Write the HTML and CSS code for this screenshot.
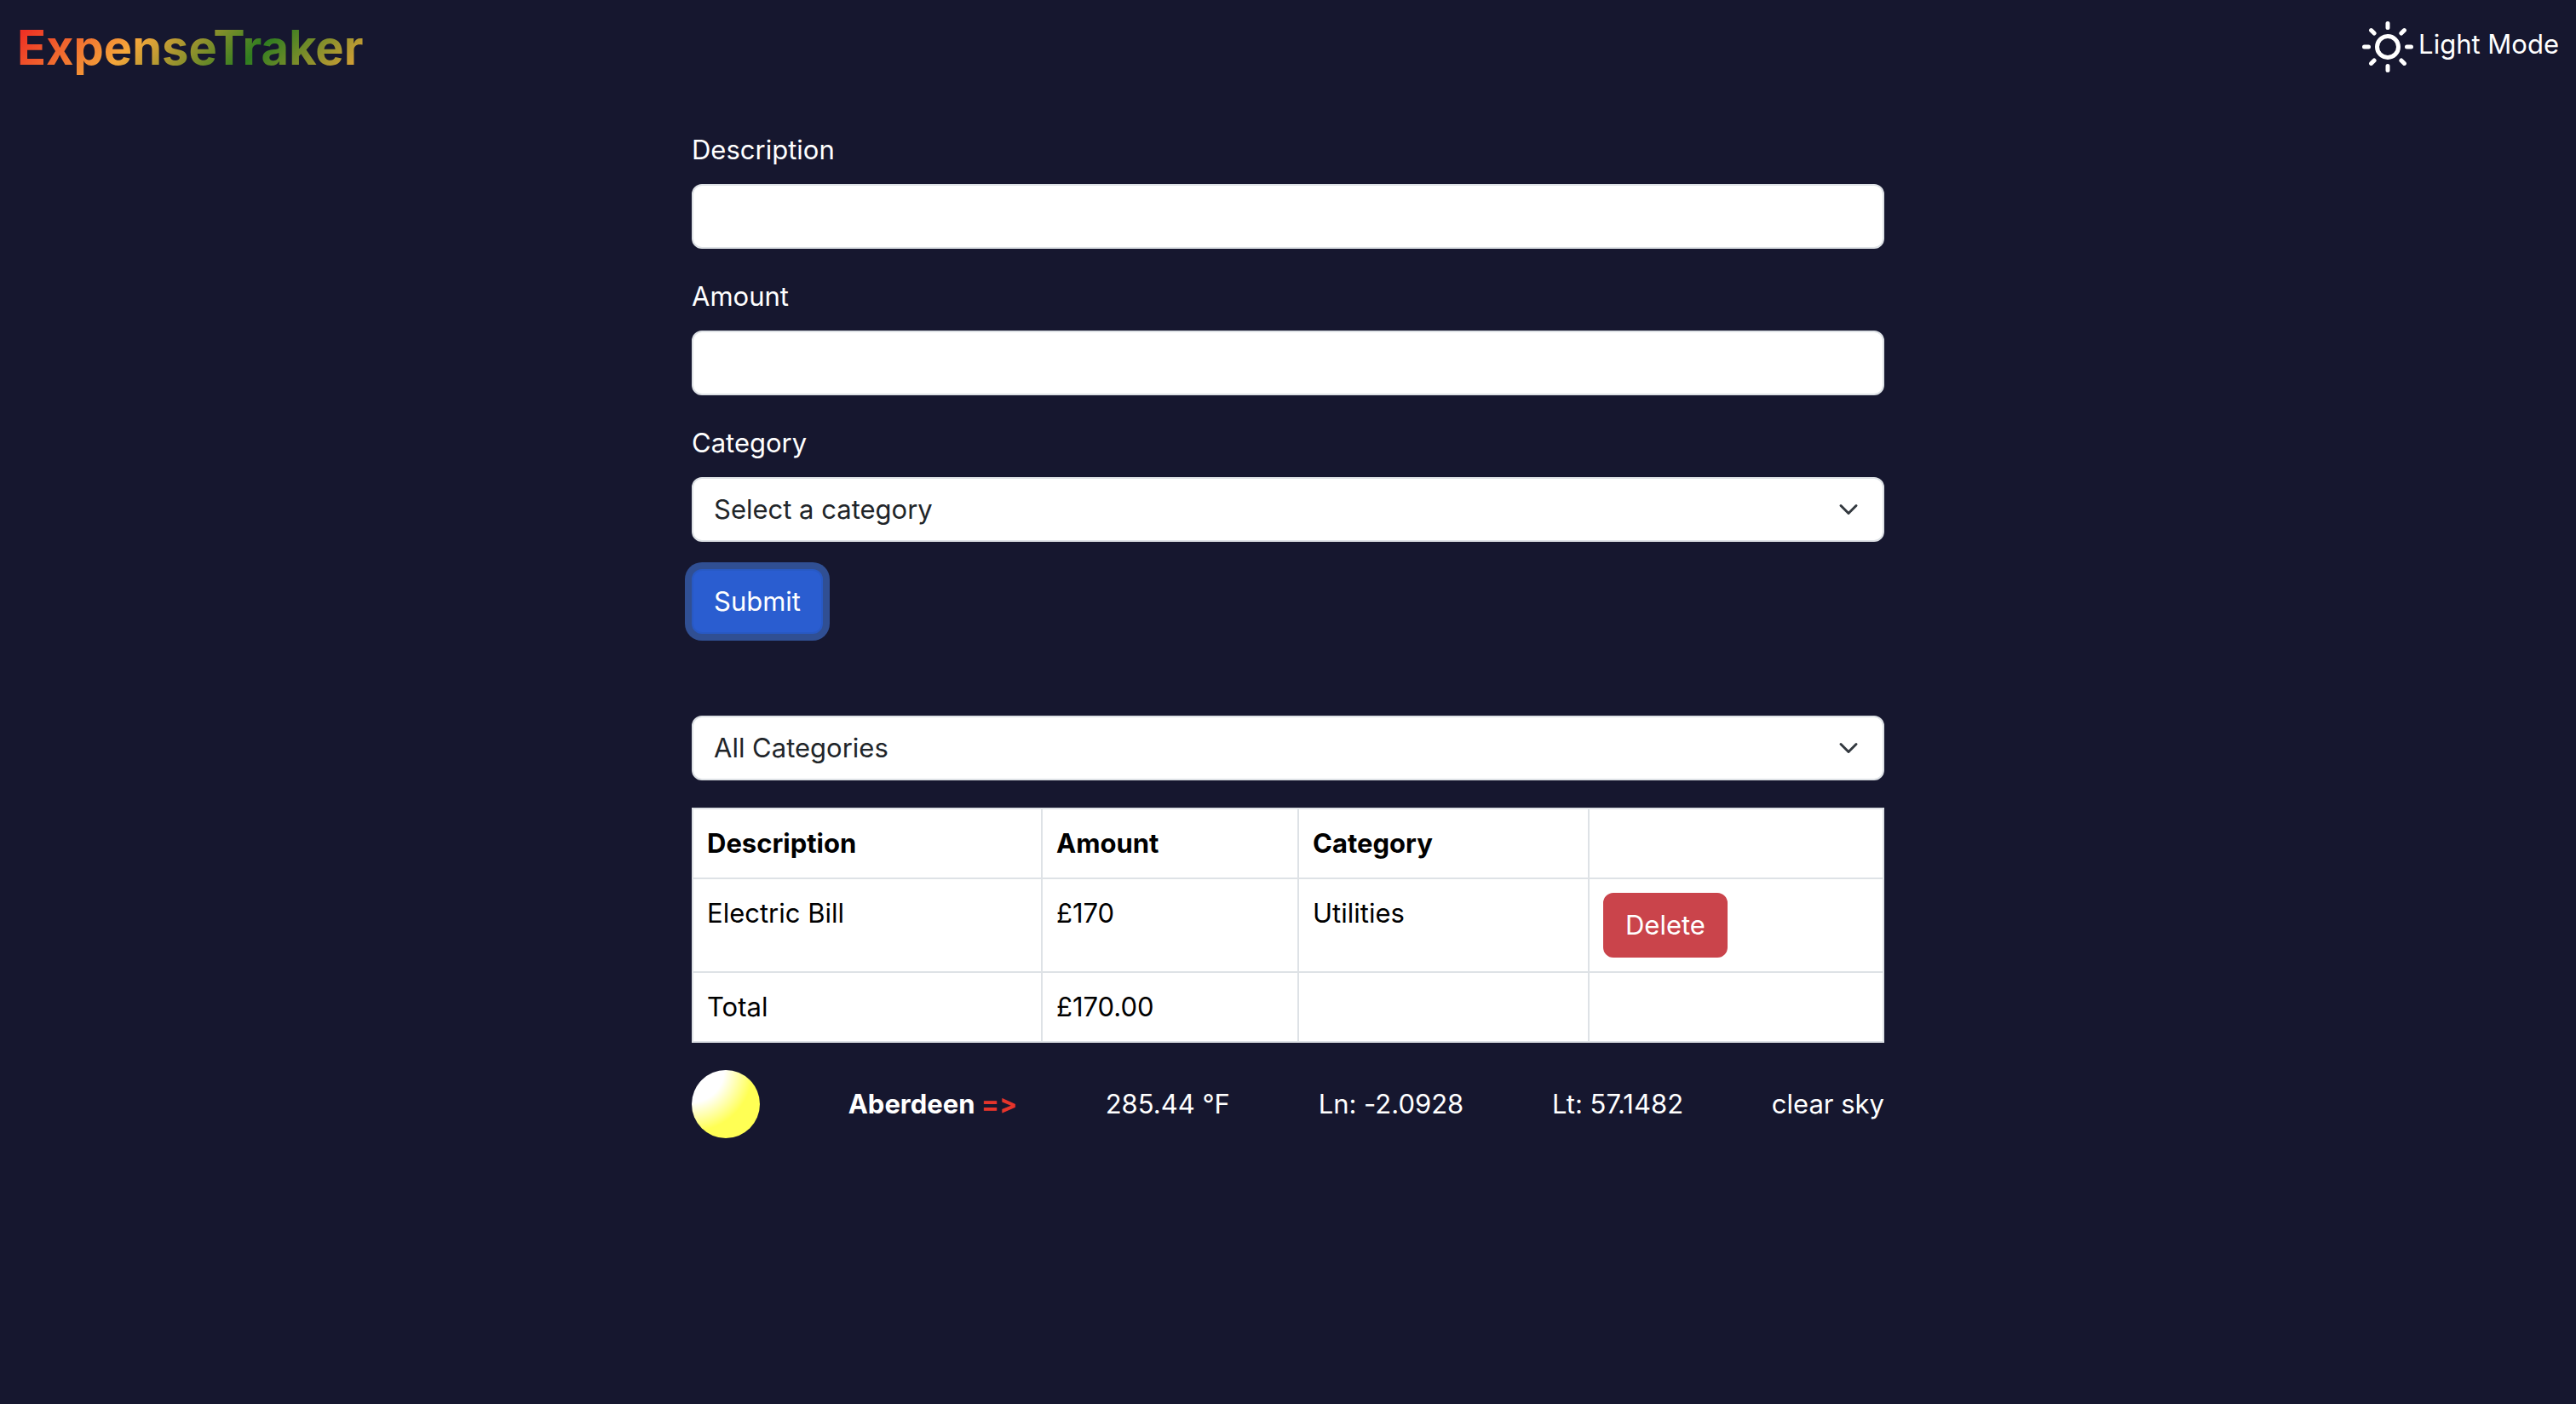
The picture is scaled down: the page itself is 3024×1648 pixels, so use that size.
FILE: index.html
```html
<!DOCTYPE html>
<html lang="en">
<head>
<meta charset="utf-8">
<title>ExpenseTraker</title>
<link rel="stylesheet" href="styles.css">
</head>
<body>
<header class="topbar">
  <h1 class="brand">ExpenseTraker</h1>
  <button type="button" class="theme-toggle">
    <svg class="theme-icon" viewBox="0 0 24 24" aria-hidden="true">
      <circle cx="12" cy="12" r="5"/>
      <path d="M12 1v2M12 21v2M4.22 4.22l1.42 1.42M18.36 18.36l1.42 1.42M1 12h2M21 12h2M4.22 19.78l1.42-1.42M18.36 5.64l1.42-1.42"/>
    </svg>
    <span class="theme-label">Light Mode</span>
  </button>
</header>
<main class="container">
  <form class="expense-form">
    <div class="field">
      <label for="description">Description</label>
      <input class="control" type="text" id="description">
    </div>
    <div class="field">
      <label for="amount">Amount</label>
      <input class="control" type="text" inputmode="decimal" id="amount">
    </div>
    <div class="field">
      <label for="category">Category</label>
      <div class="select-wrap">
        <select class="control" id="category">
          <option>Select a category</option>
          <option>Utilities</option>
        </select>
        <svg class="chevron" viewBox="0 0 16 16" aria-hidden="true"><path d="m2 5 6 6 6-6"/></svg>
      </div>
    </div>
    <button type="button" class="btn btn-primary">Submit</button>
  </form>
  <div class="select-wrap">
    <select class="control" aria-label="Filter by category">
      <option>All Categories</option>
      <option>Utilities</option>
    </select>
    <svg class="chevron" viewBox="0 0 16 16" aria-hidden="true"><path d="m2 5 6 6 6-6"/></svg>
  </div>
  <table class="expenses">
    <colgroup><col class="col-description"><col class="col-amount"><col class="col-category"><col></colgroup>
    <thead>
      <tr><th>Description</th><th>Amount</th><th>Category</th><th></th></tr>
    </thead>
    <tbody>
      <tr><td>Electric Bill</td><td>£170</td><td>Utilities</td><td><button type="button" class="btn btn-danger">Delete</button></td></tr>
    </tbody>
    <tfoot>
      <tr><td>Total</td><td>£170.00</td><td></td><td></td></tr>
    </tfoot>
  </table>
  <section class="weather">
    <span class="sun"></span>
    <strong>Aberdeen <span class="arrow">=&gt;</span></strong>
    <span>285.44 °F</span>
    <span>Ln: -2.0928</span>
    <span>Lt: 57.1482</span>
    <span>clear sky</span>
  </section>
</main>
</body>
</html>
```
FILE: styles.css
```css
* {
  box-sizing: border-box;
}

body {
  margin: 0;
  background: #16172f;
  color: #fff;
  font-family: Inter, "Liberation Sans", sans-serif;
  font-size: 31px;
  line-height: 48px;
}

.topbar {
  display: flex;
  justify-content: space-between;
  align-items: flex-start;
  padding: 20px;
}

.brand {
  margin: 0;
  font-size: 56px;
  font-weight: 700;
  line-height: 72px;
  background: linear-gradient(135deg, #ee3124 5%, #f4a63a 35%, #2f7d20 67%, #f4a63a);
  -webkit-background-clip: text;
  background-clip: text;
  color: transparent;
}

.theme-toggle {
  display: flex;
  align-items: flex-start;
  gap: 6px;
  margin: 5px 0 0;
  padding: 0;
  border: 0;
  background: none;
  color: inherit;
  font: inherit;
}

.theme-icon {
  width: 60px;
  height: 60px;
  fill: none;
  stroke: #fff;
  stroke-width: 2;
  stroke-linecap: round;
}

.theme-label {
  line-height: 54px;
}

.container {
  display: flex;
  flex-direction: column;
  max-width: 1400px;
  margin: 40px auto 0;
}

.expense-form {
  display: flex;
  flex-direction: column;
  gap: 32px;
  margin-bottom: 96px;
}

.field {
  display: flex;
  flex-direction: column;
  gap: 16px;
}

.control {
  display: block;
  width: 100%;
  height: 76px;
  padding: 12px 24px;
  border: 2px solid #dee2e6;
  border-radius: 12px;
  background: #fff;
  color: #212529;
  font: inherit;
  appearance: none;
}

.select-wrap {
  position: relative;
}

.chevron {
  position: absolute;
  top: 26px;
  right: 30px;
  width: 24px;
  height: 24px;
  fill: none;
  stroke: #343a40;
  stroke-width: 2;
  stroke-linecap: round;
  stroke-linejoin: round;
  pointer-events: none;
}

.btn {
  align-self: flex-start;
  display: block;
  height: 76px;
  padding: 12px 24px;
  border: 2px solid;
  border-radius: 12px;
  color: #fff;
  font: inherit;
}

.btn-primary {
  border-color: #2859c4;
  background: #2a5dd0;
  box-shadow: 0 0 0 8px #304f93;
}

.btn-danger {
  border-color: #ca444b;
  background: #ca444b;
}

.expenses {
  width: 100%;
  margin: 32px 0 22px;
  border-collapse: collapse;
  table-layout: fixed;
  background: #fff;
  color: #000;
}

.col-description {
  width: 410px;
}

.col-amount {
  width: 301px;
}

.col-category {
  width: 341px;
}

.expenses th,
.expenses td {
  height: 82px;
  padding: 16px;
  border: 2px solid #dee2e6;
  text-align: left;
  vertical-align: top;
}

.weather {
  display: flex;
  justify-content: space-between;
  align-items: center;
  margin-top: 10px;
  font-variant-ligatures: none;
}

.sun {
  width: 80px;
  height: 80px;
  border-radius: 50%;
  background: radial-gradient(circle at top left, #fff 38px, #ffff54 72px);
}

.arrow {
  color: #e6352b;
}
```
